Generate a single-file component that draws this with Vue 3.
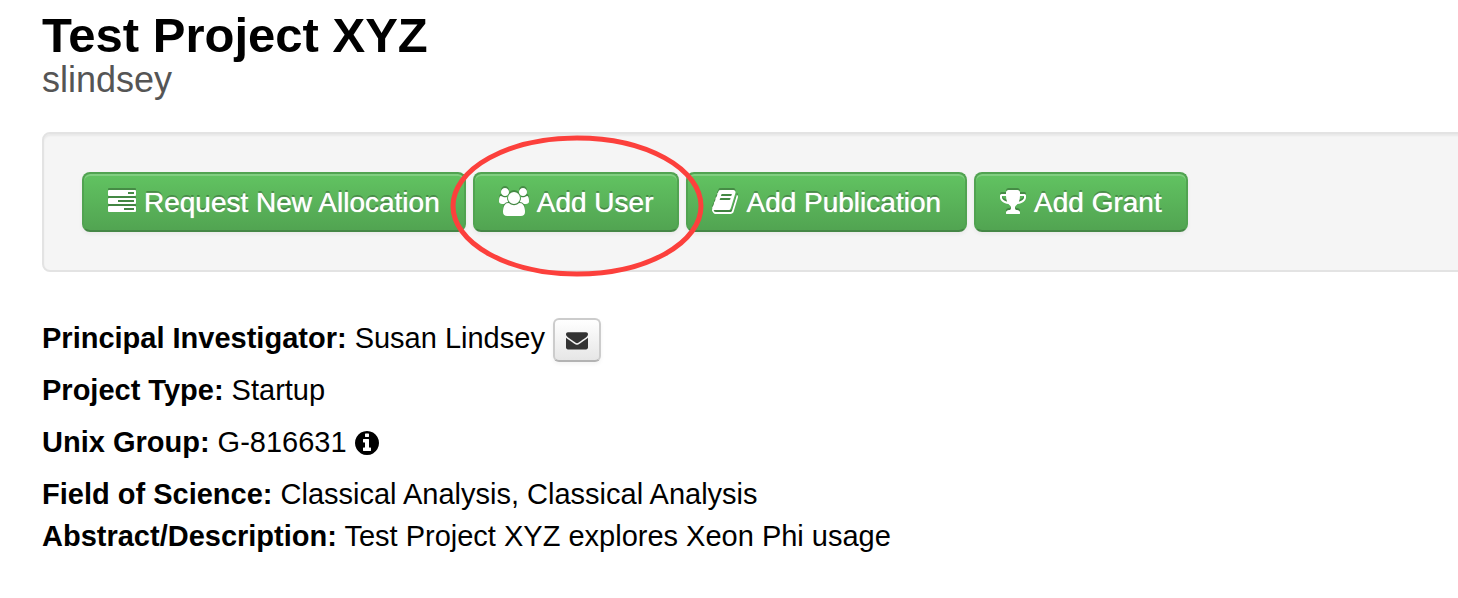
<script setup>
const icons = {
  tasks: {
    box: '0 1 28 28',
    width: 28,
    d: 'M1 3h26q1 0 1 1v4q0 1-1 1H1q-1 0-1-1V4q0-1 1-1zM20 5v2h6V5zM1 11h26q1 0 1 1v4q0 1-1 1H1q-1 0-1-1v-4q0-1 1-1zM10 13v2h16v-2zM1 19h26q1 0 1 1v4q0 1-1 1H1q-1 0-1-1v-4q0-1 1-1zM16 21v2h10v-2z',
  },
  users: {
    box: '0 0 1920 1792',
    width: 30,
    d: 'M593 896q-162 5-265 128h-134q-82 0-138-40.5t-56-118.5q0-353 124-353 6 0 43.5 21t97.5 42.5 119 21.5q67 0 133-23-5 37-5 66 0 139 81 256zm1071 637q0 120-73 189.5t-194 69.5h-874q-121 0-194-69.5t-73-189.5q0-53 3.5-103.5t14-109 26.5-108.5 43-97.5 62-81 85.5-53.5 111.5-20q10 0 43 21.5t73 48 107 48 135 21.5 135-21.5 107-48 73-48 43-21.5q61 0 111.5 20t85.5 53.5 62 81 43 97.5 26.5 108.5 14 109 3.5 103.5zm-1024-1277q0 106-75 181t-181 75-181-75-75-181 75-181 181-75 181 75 75 181zm704 384q0 159-112.5 271.5t-271.5 112.5-271.5-112.5-112.5-271.5 112.5-271.5 271.5-112.5 271.5 112.5 112.5 271.5zm576 225q0 78-56 118.5t-138 40.5h-134q-103-123-265-128 81-117 81-256 0-29-5-66 66 23 133 23 59 0 119-21.5t97.5-42.5 43.5-21q124 0 124 353zm-128-609q0 106-75 181t-181 75-181-75-75-181 75-181 181-75 181 75 75 181z',
  },
  book: {
    box: '64 0 1664 1792',
    width: 26,
    d: 'M1703 478q40 57 18 129l-275 906q-19 64-76.5 107.5t-122.5 43.5h-923q-77 0-148.5-53.5t-99.5-131.5q-24-67-2-127 0-4 3-27t4-37q1-8-3-21.5t-3-19.5q2-11 8-21t16.5-23.5 16.5-23.5q23-38 45-91.5t30-91.5q3-10 .5-30t-.5-28q3-11 17-28t17-23q21-36 42-92t25-90q1-9-2.5-32t.5-28q4-13 22-30.5t22-22.5q19-26 42.5-84.5t27.5-96.5q1-8-3-25.5t-2-26.5q2-8 9-18t18-23 17-21q8-12 16.5-30.5t15-35 16-36 19.5-32 26.5-23.5 36-11.5 47.5 5.5l-1 3q38-9 51-9h761q74 0 114 56t18 130l-274 906q-36 119-71.5 153.5t-128.5 34.5h-869q-27 0-38 15-11 16-1 43 24 70 144 70h923q29 0 56-15.5t35-41.5l300-987q7-22 5-57 38 15 59 43zm-1064 2q-4 13 2 22.5t20 9.5h608q13 0 25.5-9.5t16.5-22.5l21-64q4-13-2-22.5t-20-9.5h-608q-13 0-25.5 9.5t-16.5 22.5zm-83 256q-4 13 2 22.5t20 9.5h608q13 0 25.5-9.5t16.5-22.5l21-64q4-13-2-22.5t-20-9.5h-608q-13 0-25.5 9.5t-16.5 22.5z',
  },
  trophy: {
    box: '64 0 1664 1792',
    width: 26,
    d: 'M522 883q-74-162-74-371h-256v96q0 78 94.5 162t235.5 113zm1078-275v-96h-256q0 209-74 371 141-29 235.5-113t94.5-162zm128-128v128q0 71-41.5 143t-112 130-173 97.5-215.5 44.5q-42 54-95 95-38 34-52.5 72.5t-14.5 89.5q0 54 30.5 91t97.5 37q75 0 133.5 45.5t58.5 114.5v64q0 14-9 23t-23 9h-832q-14 0-23-9t-9-23v-64q0-69 58.5-114.5t133.5-45.5q67 0 97.5-37t30.5-91q0-51-14.5-89.5t-52.5-72.5q-53-41-95-95-113-5-215.5-44.5t-173-97.5-112-130-41.5-143v-128q0-40 28-68t68-28h288v-96q0-66 47-113t113-47h576q66 0 113 47t47 113v96h288q40 0 68 28t28 68z',
  },
}

const actions = [
  { label: 'Request New Allocation', icon: icons.tasks },
  { label: 'Add User', icon: icons.users, circled: true },
  { label: 'Add Publication', icon: icons.book },
  { label: 'Add Grant', icon: icons.trophy },
]
</script>

<template>
  <main class="page">
    <header>
      <h1>Test Project XYZ</h1>
      <p class="owner">slindsey</p>
    </header>

    <div class="well">
      <div v-for="action in actions" :key="action.label" class="action">
        <button type="button" class="btn">
          <svg class="icon" :width="action.icon.width" height="28" :viewBox="action.icon.box" aria-hidden="true">
            <path :d="action.icon.d" fill-rule="evenodd" />
          </svg>
          <span>{{ action.label }}</span>
        </button>
        <svg v-if="action.circled" class="ring" viewBox="0 0 254 142" aria-hidden="true">
          <ellipse cx="127" cy="71" rx="124" ry="68" />
        </svg>
      </div>
    </div>

    <section class="details">
      <p>
        <strong>Principal Investigator:</strong> Susan Lindsey
        <button type="button" class="mail" aria-label="Email Susan Lindsey">
          <svg width="22" height="22" viewBox="0 0 1792 1792" aria-hidden="true">
            <path d="M1792 710v794q0 66-47 113t-113 47h-1472q-66 0-113-47t-47-113v-794q44 49 101 87 362 246 497 345 57 42 92.5 65.5t94.5 48 110 24.5h2q51 0 110-24.5t94.5-48 92.5-65.5q170-123 498-345 57-39 100-87zm0-294q0 79-49 151t-122 123q-376 261-468 325-10 7-42.5 31t-54 38.5-52 32.5-57.5 27-50 9h-2q-23 0-50-9t-57.5-27-52-32.5-54-38.5-42.5-31q-91-64-262-182.5t-205-142.5q-62-42-117-115.5t-55-136.5q0-78 41.5-130t118.5-52h1472q65 0 112.5 47t47.5 113z" />
          </svg>
        </button>
      </p>
      <p><strong>Project Type:</strong> Startup</p>
      <p>
        <strong>Unix Group:</strong> G-816631
        <svg class="info" width="24" height="24" viewBox="128 128 1536 1536" aria-hidden="true">
          <path d="M1152 1376v-160q0-14-9-23t-23-9h-96v-512q0-14-9-23t-23-9h-320q-14 0-23 9t-9 23v160q0 14 9 23t23 9h96v320h-96q-14 0-23 9t-9 23v160q0 14 9 23t23 9h448q14 0 23-9t9-23zm-128-896v-160q0-14-9-23t-23-9h-192q-14 0-23 9t-9 23v160q0 14 9 23t23 9h192q14 0 23-9t9-23zm640 416q0 209-103 385.5t-279.5 279.5-385.5 103-385.5-103-279.5-279.5-103-385.5 103-385.5 279.5-279.5 385.5-103 385.5 103 279.5 279.5 103 385.5z" />
        </svg>
      </p>
      <p>
        <strong>Field of Science:</strong> Classical Analysis, Classical Analysis<br />
        <strong>Abstract/Description:</strong> Test Project XYZ explores Xeon Phi usage
      </p>
    </section>
  </main>
</template>

<style>
body {
  margin: 0;
  background: #fff;
}
</style>

<style scoped>
.page {
  padding: 10px 0 40px 42px;
  overflow: hidden;
  color: #000;
  font: 29px/42px "Liberation Sans", Arial, sans-serif;
}
h1,
p {
  margin: 0;
}
h1 {
  font-size: 49px;
  line-height: 50px;
}
.owner {
  color: #555;
  font-size: 36px;
  line-height: 40px;
}
.well {
  display: flex;
  gap: 7px;
  margin: 32px -8px 45px 0;
  padding: 38px;
  border: 2px solid #e3e3e3;
  border-radius: 8px;
  background: #f5f5f5;
  box-shadow: inset 0 2px 2px rgba(0, 0, 0, 0.05);
}
.action {
  position: relative;
}
.btn {
  display: flex;
  align-items: center;
  gap: 8px;
  padding: 9px 24px 7px;
  border: 2px solid;
  border-color: #51a351 #51a351 #458746;
  border-radius: 8px;
  background: linear-gradient(#62c462, #51a351);
  background-origin: border-box;
  box-shadow: inset 0 2px 0 rgba(255, 255, 255, 0.2), 0 2px 4px rgba(0, 0, 0, 0.05);
  color: #fff;
  font: inherit;
  font-size: 28px;
  line-height: 40px;
  text-shadow: 0 0 1px #fff, 0 -2px 0 rgba(0, 0, 0, 0.25);
  white-space: nowrap;
}
.icon {
  margin-bottom: 2px;
  overflow: visible;
  fill: #fff;
  filter: drop-shadow(0 -2px 0 rgba(0, 0, 0, 0.25));
}
.ring {
  position: absolute;
  z-index: 1;
  top: -37px;
  left: 50%;
  width: 254px;
  height: 142px;
  margin-left: -126px;
  fill: none;
  stroke: #fc403c;
  stroke-width: 5px;
  pointer-events: none;
}
.details p + p {
  margin-top: 10px;
}
.mail {
  display: inline-flex;
  align-items: center;
  justify-content: center;
  box-sizing: border-box;
  width: 48px;
  height: 44px;
  margin: -4px 0;
  padding: 0;
  border: 2px solid #ccc;
  border-bottom-color: #b3b3b3;
  border-radius: 6px;
  background: linear-gradient(#fff, #e6e6e6);
  box-shadow: 0 2px 4px rgba(0, 0, 0, 0.05);
  fill: #333;
  vertical-align: middle;
}
.info {
  vertical-align: -3px;
}
</style>
